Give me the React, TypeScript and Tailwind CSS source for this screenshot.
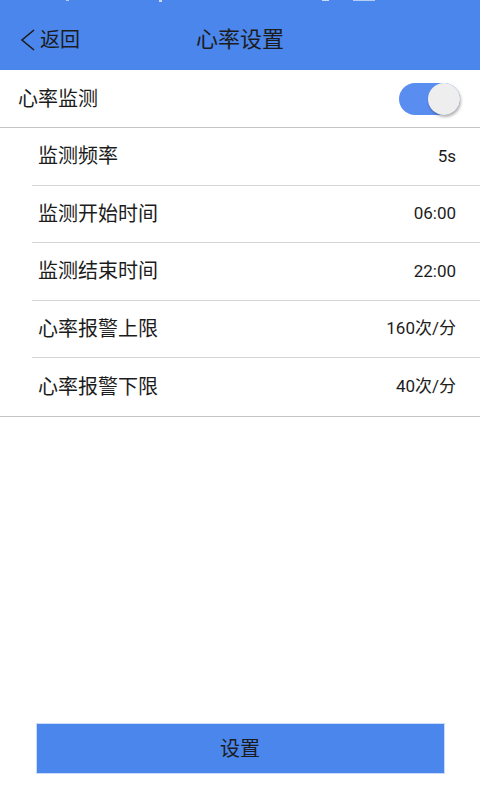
import { useState } from 'react'

const rows = [
  { label: '监测频率', value: '5s' },
  { label: '监测开始时间', value: '06:00' },
  { label: '监测结束时间', value: '22:00' },
  { label: '心率报警上限', value: '160次/分' },
  { label: '心率报警下限', value: '40次/分' },
]

const font = { fontFamily: 'Roboto, "Noto Sans CJK SC", sans-serif' }

function Toggle({ on, onChange }: { on: boolean; onChange: () => void }) {
  return (
    <button
      type="button"
      onClick={onChange}
      className={`relative h-[32px] w-[61px] rounded-full ${on ? 'bg-[#5a8df0]' : 'bg-[#c8c8c8]'}`}
    >
      <span
        className={`absolute top-0 h-[32px] w-[32px] rounded-full bg-[#eeeeee] shadow-[1px_2px_3px_rgba(0,0,0,0.3)] ${on ? 'right-0' : 'left-0'}`}
      />
    </button>
  )
}

export default function App() {
  const [on, setOn] = useState(true)

  return (
    <div
      className="flex h-[800px] w-[480px] flex-col bg-white text-[#1c1c1c]"
      style={font}
    >
      {/* header, status bar is cut off at the top */}
      <div className="relative flex h-[70px] shrink-0 items-center bg-[#4a86ec]">
        <div className="absolute left-0 top-0 flex w-full px-[66px]">
          <span className="h-[1px] w-[3px] bg-white/60" />
          <span className="ml-[90px] h-[2px] w-[3px] bg-white/70" />
          <span className="ml-[160px] h-[1px] w-[7px] bg-white/70" />
          <span className="ml-[24px] h-[1px] w-[22px] bg-white/60" />
        </div>
        <button type="button" className="flex items-center pl-[20px] pt-[10px] text-[20px]">
          <svg width="16" height="22" viewBox="0 0 16 22" fill="none">
            <path d="M14 1 L2 11 L14 21" stroke="#1c1c1c" strokeWidth="1.6" />
          </svg>
          <span className="ml-[4px] leading-none">返回</span>
        </button>
        <div className="absolute left-1/2 top-[29px] -translate-x-1/2 text-[22px] leading-none">
          心率设置
        </div>
      </div>

      {/* switch row */}
      <div className="flex h-[58px] shrink-0 items-center justify-between border-b border-[#c4c4c4] pl-[18px] pr-[20px]">
        <span className="text-[20px]">心率监测</span>
        <Toggle on={on} onChange={() => setOn(!on)} />
      </div>

      <div className="border-b border-[#c4c4c4] pl-[32px]">
        {rows.map((r, i) => (
          <div
            key={r.label}
            className={`flex h-[57.5px] items-center justify-between pl-[6px] pr-[24px] ${i < rows.length - 1 ? 'border-b border-[#d4d4d4]' : ''}`}
          >
            <span className="text-[20px]">{r.label}</span>
            <span className="text-[17px]">{r.value}</span>
          </div>
        ))}
      </div>

      <div className="flex-1" />

      <div className="flex justify-center pb-[26px]">
        <button
          type="button"
          className="h-[51px] w-[409px] border border-[#c8dbf8] bg-[#4a86ec] text-[20px]"
        >
          设置
        </button>
      </div>
    </div>
  )
}
